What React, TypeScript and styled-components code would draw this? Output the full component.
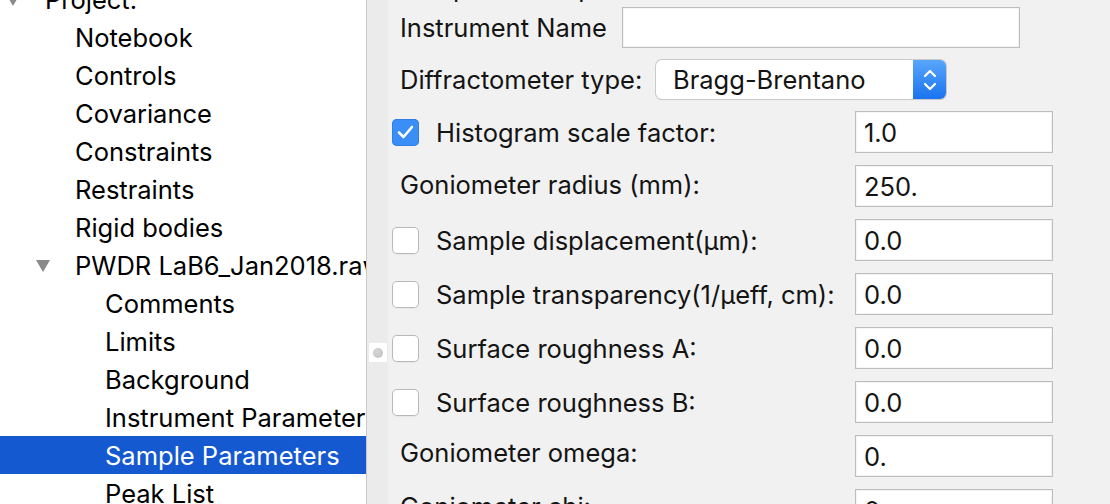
import React from "react";
import styled, { createGlobalStyle } from "styled-components";

const Global = createGlobalStyle`
  html, body { margin: 0; padding: 0; background: #f1f1f1; }
  body { font-family: "Inter", "Liberation Sans", sans-serif; -webkit-font-smoothing: antialiased; }
  * { box-sizing: border-box; }
`;

const FONT = `"Inter", "Liberation Sans", sans-serif`;

const Window = styled.div`
  display: flex;
  width: 1110px;
  height: 504px;
  overflow: hidden;
  background: #f1f1f1;
`;

const TreePanel = styled.div`
  width: 367px;
  flex: none;
  background: #ffffff;
  border-right: 1px solid #c9c9c9;
  overflow: hidden;
`;

const TreeList = styled.div`
  display: flex;
  flex-direction: column;
  margin-top: -20px;
`;

const TreeRow = styled.div<{ $level: number; $selected?: boolean }>`
  display: flex;
  align-items: center;
  height: 38px;
  padding-left: ${(p) => p.$level * 30}px;
  padding-top: 1px;
  background: ${(p) => (p.$selected ? "#1559d0" : "transparent")};
  color: ${(p) => (p.$selected ? "#ffffff" : "#000000")};
  font-family: ${FONT};
  font-size: 25.5px;
  white-space: nowrap;
`;

const Toggle = styled.span`
  width: 26px;
  flex: none;
  display: flex;
  justify-content: center;
  align-items: center;
  margin-right: 19px;
`;

const Triangle = styled.span`
  width: 0;
  height: 0;
  border-left: 7.5px solid transparent;
  border-right: 7.5px solid transparent;
  border-top: 12px solid #8a8a8a;
`;

const Sash = styled.div`
  position: relative;
  width: 21px;
  flex: none;
  background: #ebebeb;
`;

const SashKnob = styled.div`
  position: absolute;
  left: 2px;
  top: 343px;
  width: 18px;
  height: 19px;
  background: #ffffff;
  display: flex;
  align-items: center;
  justify-content: center;
  &::after {
    content: "";
    width: 10px;
    height: 10px;
    border-radius: 50%;
    background: radial-gradient(circle at 40% 35%, #d6d6d6, #bdbdbd);
  }
`;

const Content = styled.div`
  flex: 1;
  display: flex;
  flex-direction: column;
  padding-left: 4px;
  font-family: ${FONT};
  font-size: 25.5px;
  color: #141414;
  white-space: nowrap;
`;

const Title = styled.div`
  height: 26px;
  margin-top: -25px;
  padding-left: 8px;
  line-height: 26px;
`;

const NameRow = styled.div`
  display: flex;
  align-items: center;
  height: 41px;
  margin-top: 6px;
  padding-left: 8px;
`;

const SelectRow = styled.div`
  display: flex;
  align-items: center;
  height: 39px;
  margin-top: 12px;
  padding-left: 8px;
`;

const Label = styled.span<{ $w?: number; $lift?: number }>`
  display: inline-block;
  width: ${(p) => (p.$w ? `${p.$w}px` : "auto")};
  flex: none;
  position: relative;
  top: ${(p) => -(p.$lift || 0)}px;
`;

const TextBox = styled.div<{ $w: number; $h: number }>`
  width: ${(p) => p.$w}px;
  height: ${(p) => p.$h}px;
  flex: none;
  background: #ffffff;
  border: 1px solid #bdbdbd;
  box-shadow: inset 0 0 0 1px #f4f4f4;
  display: flex;
  align-items: center;
  padding-left: 8px;
  color: #141414;
`;

const Select = styled.div`
  width: 290px;
  height: 39px;
  flex: none;
  display: flex;
  background: #ffffff;
  border-radius: 6px;
  box-shadow: 0 0 0 1px #cacaca, 0 1px 1px rgba(0, 0, 0, 0.15);
  overflow: hidden;
`;

const SelectText = styled.div`
  flex: 1;
  display: flex;
  align-items: center;
  padding-left: 17px;
  color: #141414;
`;

const Stepper = styled.div`
  width: 33px;
  flex: none;
  display: flex;
  align-items: center;
  justify-content: center;
  background: linear-gradient(#58a6fb, #1a73ef);
`;

const ParamGrid = styled.div`
  display: grid;
  grid-template-columns: 463px 198px;
  grid-auto-rows: 42px;
  row-gap: 12px;
  margin-top: 12px;
`;

const ParamLabel = styled.div<{ $check?: boolean }>`
  display: flex;
  align-items: center;
  padding-left: ${(p) => (p.$check ? 0 : 8)}px;
`;

const Check = styled.span<{ $on?: boolean }>`
  width: 27px;
  height: 27px;
  flex: none;
  border-radius: 5px;
  margin-right: 17px;
  display: flex;
  align-items: center;
  justify-content: center;
  background: ${(p) => (p.$on ? "#3a8ef6" : "#ffffff")};
  box-shadow: ${(p) =>
    p.$on ? "inset 0 0 0 1px #2f7fe8" : "inset 0 0 0 1px #b9b9b9, 0 1px 0 rgba(0,0,0,0.04)"};
`;

const tree: { label: string; level: number; open?: boolean; selected?: boolean }[] = [
  { label: "Project:", level: 0, open: true },
  { label: "Notebook", level: 1 },
  { label: "Controls", level: 1 },
  { label: "Covariance", level: 1 },
  { label: "Constraints", level: 1 },
  { label: "Restraints", level: 1 },
  { label: "Rigid bodies", level: 1 },
  { label: "PWDR LaB6_Jan2018.raw", level: 1, open: true },
  { label: "Comments", level: 2 },
  { label: "Limits", level: 2 },
  { label: "Background", level: 2 },
  { label: "Instrument Parameters", level: 2 },
  { label: "Sample Parameters", level: 2, selected: true },
  { label: "Peak List", level: 2 },
];

const params: { label: string; value: string; check?: boolean; on?: boolean; lift?: number }[] = [
  { label: "Histogram scale factor:", value: "1.0", check: true, on: true },
  { label: "Goniometer radius (mm):", value: "250.", lift: 2 },
  { label: "Sample displacement(µm):", value: "0.0", check: true },
  { label: "Sample transparency(1/µeff, cm):", value: "0.0", check: true },
  { label: "Surface roughness A:", value: "0.0", check: true },
  { label: "Surface roughness B:", value: "0.0", check: true },
  { label: "Goniometer omega:", value: "0.", lift: 4 },
  { label: "Goniometer chi:", value: "0.", lift: 4 },
];

const CheckMark = () => (
  <svg width="17" height="14" viewBox="0 0 17 14">
    <path d="M2 7.5 L6.5 12 L15 2" fill="none" stroke="#ffffff" strokeWidth="2.6" strokeLinecap="round" strokeLinejoin="round" />
  </svg>
);

const Chevrons = () => (
  <svg width="16" height="26" viewBox="0 0 16 26">
    <path d="M3 9 L8 4 L13 9" fill="none" stroke="#ffffff" strokeWidth="2.2" strokeLinecap="round" strokeLinejoin="round" />
    <path d="M3 17 L8 22 L13 17" fill="none" stroke="#ffffff" strokeWidth="2.2" strokeLinecap="round" strokeLinejoin="round" />
  </svg>
);

export default function App() {
  return (
    <>
      <Global />
      <Window>
        <TreePanel>
          <TreeList>
            {tree.map((t) => (
              <TreeRow key={t.label} $level={t.level} $selected={t.selected}>
                <Toggle>{t.open && <Triangle />}</Toggle>
                {t.label}
              </TreeRow>
            ))}
          </TreeList>
        </TreePanel>
        <Sash>
          <SashKnob />
        </Sash>
        <Content>
          <Title>Sample and Experimental Parameters</Title>
          <NameRow>
            <Label $w={222}>Instrument Name</Label>
            <TextBox $w={398} $h={41} />
          </NameRow>
          <SelectRow>
            <Label $w={256}>Diffractometer type:</Label>
            <Select>
              <SelectText>Bragg-Brentano</SelectText>
              <Stepper>
                <Chevrons />
              </Stepper>
            </Select>
          </SelectRow>
          <ParamGrid>
            {params.map((p) => (
              <React.Fragment key={p.label}>
                <ParamLabel $check={p.check}>
                  {p.check && (
                    <Check $on={p.on}>{p.on && <CheckMark />}</Check>
                  )}
                  <Label $lift={p.lift}>{p.label}</Label>
                </ParamLabel>
                <TextBox $w={198} $h={42}>{p.value}</TextBox>
              </React.Fragment>
            ))}
          </ParamGrid>
        </Content>
      </Window>
    </>
  );
}
